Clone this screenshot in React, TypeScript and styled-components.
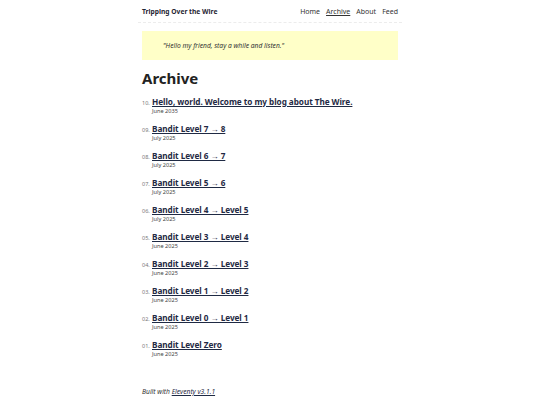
import React from 'react';
import styled, { createGlobalStyle } from 'styled-components';

const GlobalStyle = createGlobalStyle`
  html, body {
    margin: 0;
    padding: 0;
    background: #ffffff;
  }
  body {
    font-family: "Noto Sans", "Open Sans", sans-serif;
    color: #222222;
  }
`;

interface Post {
  num: string;
  title: string;
  date: string;
}

const posts: Post[] = [
  { num: '10', title: 'Hello, world. Welcome to my blog about The Wire.', date: 'June 2035' },
  { num: '09', title: 'Bandit Level 7 → 8', date: 'July 2025' },
  { num: '08', title: 'Bandit Level 6 → 7', date: 'July 2025' },
  { num: '07', title: 'Bandit Level 5 → 6', date: 'July 2025' },
  { num: '06', title: 'Bandit Level 4 → Level 5', date: 'July 2025' },
  { num: '05', title: 'Bandit Level 3 → Level 4', date: 'June 2025' },
  { num: '04', title: 'Bandit Level 2 → Level 3', date: 'June 2025' },
  { num: '03', title: 'Bandit Level 1 → Level 2', date: 'June 2025' },
  { num: '02', title: 'Bandit Level 0 → Level 1', date: 'June 2025' },
  { num: '01', title: 'Bandit Level Zero', date: 'June 2025' },
];

const Page = styled.div`
  width: 264px;
  margin: 0 auto;
`;

const Header = styled.header`
  display: flex;
  align-items: center;
  justify-content: space-between;
  height: 22px;
  padding: 0 4px;
  border-bottom: 1px dashed #ececec;
`;

const SiteTitle = styled.a`
  font-size: 6.7px;
  font-weight: 700;
  color: #1f2633;
  text-decoration: none;
`;

const Nav = styled.nav`
  display: flex;
  gap: 6px;
`;

const NavLink = styled.a<{ $current?: boolean }>`
  font-size: 7px;
  color: #333333;
  text-decoration: ${p => (p.$current ? 'underline' : 'none')};
  text-underline-offset: 1px;
`;

const Main = styled.main`
  padding: 8px 4px 0;
`;

const Callout = styled.div`
  background: #ffffc8;
  height: 29px;
  display: flex;
  align-items: center;
  padding-left: 21px;
  font-size: 6.7px;
  font-style: italic;
  color: #333333;
`;

const Heading = styled.h1`
  margin: 8px 0 8px;
  font-size: 15px;
  font-weight: 700;
  color: #222222;
  line-height: 20px;
`;

const List = styled.ol`
  list-style: none;
  margin: 0;
  padding: 0;
  display: flex;
  flex-direction: column;
  gap: 7px;
`;

const Item = styled.li`
  display: grid;
  grid-template-columns: 10px auto;
  align-items: baseline;
`;

const Num = styled.span`
  font-size: 5.5px;
  color: #777777;
`;

const Entry = styled.div`
  display: flex;
  flex-direction: column;
`;

const Title = styled.a`
  font-size: 8.2px;
  font-weight: 700;
  color: #1f2a44;
  line-height: 11px;
  letter-spacing: -0.05px;
  text-decoration: underline;
  text-underline-offset: 1px;
`;

const DateText = styled.span`
  font-size: 5.6px;
  color: #444444;
  line-height: 9px;
`;

const Footer = styled.footer`
  padding: 28px 4px 0;
  font-size: 6.7px;
  font-style: italic;
  color: #333333;
`;

const FooterLink = styled.a`
  color: #1f2a44;
  text-decoration: underline;
`;

export default function App() {
  return (
    <>
      <GlobalStyle />
      <Page>
        <Header>
          <SiteTitle>Tripping Over the Wire</SiteTitle>
          <Nav>
            <NavLink>Home</NavLink>
            <NavLink $current>Archive</NavLink>
            <NavLink>About</NavLink>
            <NavLink>Feed</NavLink>
          </Nav>
        </Header>
        <Main>
          <Callout>"Hello my friend, stay a while and listen."</Callout>
          <Heading>Archive</Heading>
          <List>
            {posts.map(post => (
              <Item key={post.num}>
                <Num>{post.num}.</Num>
                <Entry>
                  <Title>{post.title}</Title>
                  <DateText>{post.date}</DateText>
                </Entry>
              </Item>
            ))}
          </List>
        </Main>
        <Footer>
          Built with <FooterLink>Eleventy v3.1.1</FooterLink>
        </Footer>
      </Page>
    </>
  );
}
